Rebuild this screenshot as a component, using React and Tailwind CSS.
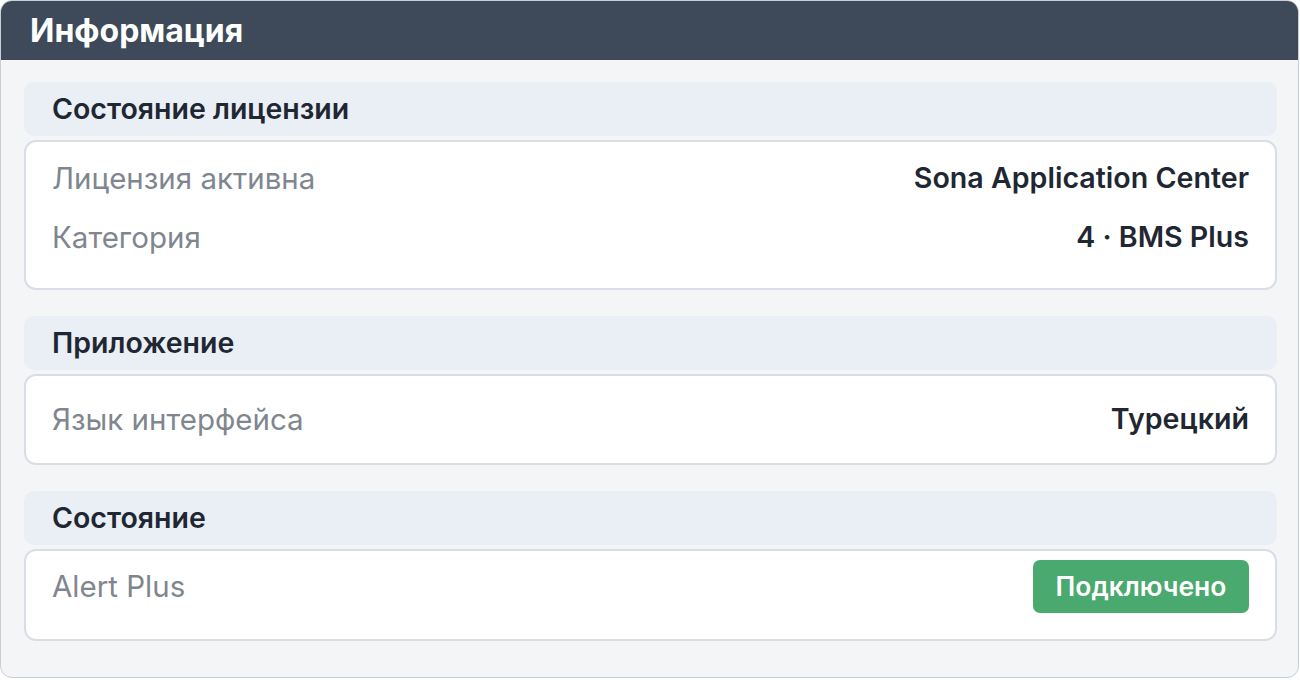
import React from "react";

const sections = [
  {
    title: "Состояние лицензии",
    cardClass: "pt-[16px] pb-[31px] gap-[19px]",
    rows: [
      { label: "Лицензия активна", value: "Sona Application Center" },
      { label: "Категория", value: "4 · BMS Plus" },
    ],
  },
  {
    title: "Приложение",
    cardClass: "pt-[23px] pb-[24px]",
    rows: [{ label: "Язык интерфейса", value: "Турецкий" }],
  },
  {
    title: "Состояние",
    cardClass: "pt-[9px] pb-[26px]",
    rows: [{ label: "Alert Plus", badge: "Подключено" }],
  },
];

const InfoSection = ({ section }) => (
  <div className="flex flex-col gap-[4px]">
    <div className="h-[54px] flex items-center px-[28px] bg-[#eaeff6] rounded-[10px]">
      <h2 className="text-[28.5px] font-semibold text-[#1f2733]">{section.title}</h2>
    </div>
    <div
      className={`flex flex-col pl-[26px] pr-[26px] bg-white border-2 border-[#d9dee6] rounded-[12px] ${section.cardClass}`}
    >
      {section.rows.map((row) => (
        <div
          key={row.label}
          className={`flex items-center justify-between ${row.badge ? "h-[53px]" : "h-[40px]"}`}
        >
          <span className="text-[29.5px] text-[#80868f]">{row.label}</span>
          {row.badge ? (
            <span className="h-[53px] w-[216px] flex items-center justify-center bg-[#49a96f] rounded-[7px] text-white text-[26.5px] font-semibold">
              {row.badge}
            </span>
          ) : (
            <span className="text-[28.6px] font-semibold text-[#1f2733]">{row.value}</span>
          )}
        </div>
      ))}
    </div>
  </div>
);

export default function App() {
  return (
    <div className="w-[1300px] h-[680px] font-['Inter',sans-serif]">
      <div className="h-[678px] w-[1299px] flex flex-col border border-[#c9cfd7] rounded-[12px] overflow-hidden bg-[#f3f5f7]">
        <div className="h-[59px] shrink-0 flex items-center px-[29px] bg-[#3e4a5a]">
          <h1 className="text-[32px] font-bold text-white">Информация</h1>
        </div>
        <div className="flex flex-col gap-[26px] pl-[23px] pr-[21px] pt-[22px]">
          {sections.map((s) => (
            <InfoSection key={s.title} section={s} />
          ))}
        </div>
      </div>
    </div>
  );
}
